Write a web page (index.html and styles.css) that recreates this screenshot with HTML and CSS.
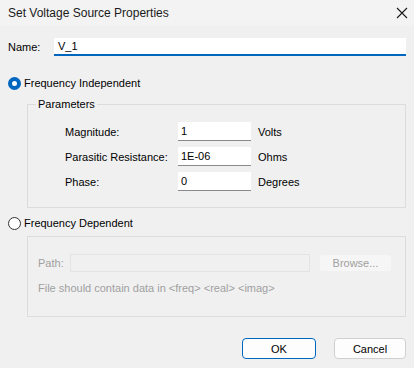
FILE: index.html
```html
<!DOCTYPE html>
<html>
  <head>
    <title>Set Voltage Source Properties</title>
    <meta name="viewport" content="width=device-width, initial-scale=1" />
    <link rel="stylesheet" href="styles.css">
  </head>

  <body>
    <div class="titlebar">
      <span>Set Voltage Source Properties</span>
      <svg class="close" width="12" height="12" viewBox="0 0 12 12">
        <path d="M1 1 L11 11 M11 1 L1 11" stroke="#1a1a1a" stroke-width="1.1" fill="none" />
      </svg>
    </div>

    <main>
      <div class="name-row">
        <label for="name">Name:</label>
        <input type="text" id="name" class="name-input" value="V_1" />
      </div>

      <div class="radio-row">
        <span class="radio checked"></span>
        <span>Frequency Independent</span>
      </div>

      <fieldset class="group params">
        <legend>Parameters</legend>
        <div class="param-grid">
          <span>Magnitude:</span>
          <input type="text" class="field" value="1" />
          <span>Volts</span>

          <span>Parasitic Resistance:</span>
          <input type="text" class="field" value="1E-06" />
          <span>Ohms</span>

          <span>Phase:</span>
          <input type="text" class="field" value="0" />
          <span>Degrees</span>
        </div>
      </fieldset>

      <div class="radio-row second">
        <span class="radio"></span>
        <span>Frequency Dependent</span>
      </div>

      <fieldset class="group disabled">
        <div class="path-row">
          <span>Path:</span>
          <span class="path-input"></span>
          <span class="browse">Browse...</span>
        </div>
        <div class="hint">File should contain data in &lt;freq&gt; &lt;real&gt; &lt;imag&gt;</div>
      </fieldset>

      <footer>
        <button class="btn primary">OK</button>
        <button class="btn">Cancel</button>
      </footer>
    </main>
  </body>
</html>
```

FILE: styles.css
```css
body {
  margin: 0;
  background: #f0f0f0;
  font-family: "Liberation Sans", Arial, sans-serif;
  font-size: 11px;
  color: #000;
}

.titlebar {
  height: 26px;
  padding: 0 6px 0 8px;
  display: flex;
  align-items: center;
  justify-content: space-between;
  background: #f3f3f3;
  color: #1a1a1a;
  font-size: 12px;
}

main {
  padding: 0 8px;
}

.name-row {
  display: flex;
  align-items: center;
  margin-top: 12px;
  height: 18px;
}

.name-row label {
  width: 46px;
}

.name-input {
  flex: 1;
  height: 18px;
  box-sizing: border-box;
  margin: 0;
  padding: 0 0 0 4px;
  border: 0;
  border-bottom: 2px solid #0067c0;
  background: #fff;
  font: inherit;
}

.radio-row {
  display: flex;
  align-items: center;
  gap: 3px;
  margin-top: 20px;
  height: 14px;
}

.radio {
  width: 13px;
  height: 13px;
  box-sizing: border-box;
  border-radius: 50%;
  border: 1px solid #333;
  background: #fff;
}

.radio.checked {
  border: 4px solid #0067c0;
  background: #fff;
}

.group {
  margin: 0 0 0 19px;
  border: 1px solid #dcdcdc;
  padding: 0;
  min-width: 0;
}

.params {
  margin-top: 8px;
  padding: 12px 0 16px 0;
}

.params legend {
  padding: 0 2px;
  margin-left: 8px;
}

.param-grid {
  display: grid;
  grid-template-columns: 106px 73px auto;
  column-gap: 7px;
  row-gap: 6px;
  align-items: center;
  padding-left: 37px;
}

.field {
  height: 19px;
  box-sizing: border-box;
  margin: 0;
  padding: 0 0 0 3px;
  border: 0;
  border-bottom: 1px solid #8a8a8a;
  background: #fff;
  font: inherit;
  width: 73px;
}

.radio-row.second {
  margin-top: 8px;
}

.disabled {
  margin-top: 6px;
  padding: 17px 14px 22px 10px;
  color: #a0a0a0;
}

.path-row {
  display: flex;
  align-items: center;
  height: 18px;
}

.path-row > span:first-child {
  width: 32px;
}

.path-input {
  width: 240px;
  height: 18px;
  box-sizing: border-box;
  border: 1px solid #e3e3e3;
  background: #f0f0f0;
}

.browse {
  margin-left: auto;
  width: 71px;
  height: 16px;
  line-height: 16px;
  text-align: center;
  background: #f6f6f6;
  border-radius: 3px;
}

.hint {
  margin-top: 10px;
}

footer {
  display: flex;
  justify-content: flex-end;
  gap: 18px;
  margin-top: 21px;
}

.btn {
  width: 72px;
  height: 21px;
  box-sizing: border-box;
  margin: 0;
  padding: 0;
  border: 1px solid #d0d0d0;
  border-radius: 4px;
  background: #fdfdfd;
  font: inherit;
  color: #000;
}

.btn.primary {
  border: 1px solid #0067c0;
  width: 74px;
}
```
